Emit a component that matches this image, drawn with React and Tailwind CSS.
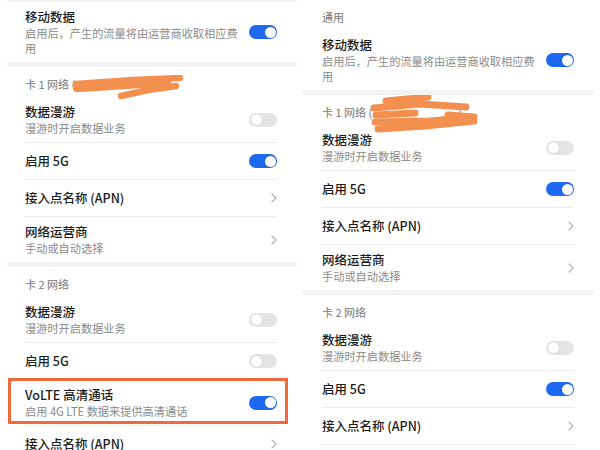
import React from "react";

const FONT = { fontFamily: '"Noto Sans CJK SC", "Noto Sans", sans-serif' };

const Toggle = ({ on }) => (
  <div
    className={`flex h-[14px] w-[28px] shrink-0 items-center rounded-full p-[1.5px] ${
      on ? "justify-end bg-[#1f68f0]" : "justify-start bg-[#e4e4e4]"
    }`}
  >
    <div className="h-[11px] w-[11px] rounded-full bg-white shadow-[0_0_1px_rgba(0,0,0,0.25)]" />
  </div>
);

const Chevron = () => (
  <svg width="6" height="10" viewBox="0 0 6 10" className="shrink-0">
    <polyline points="1,1 5,5 1,9" fill="none" stroke="#b4b4b4" strokeWidth="1.2" strokeLinecap="round" strokeLinejoin="round" />
  </svg>
);

const ScribbleLeft = () => (
  <svg width="112" height="26" viewBox="0 0 112 26" className="pointer-events-none absolute left-[48px] top-[8px]">
    <g fill="none" stroke="#f39050" strokeWidth="6.5" strokeLinecap="round" strokeLinejoin="round">
      <path d="M3 9 L60 5 L107 3" />
      <path d="M4 14 L50 11 L95 8" />
      <path d="M48 21 L75 15 L103 11" />
    </g>
  </svg>
);

const ScribbleRight = () => (
  <svg width="110" height="40" viewBox="0 0 110 40" className="pointer-events-none absolute left-[48px] top-[0px]">
    <g fill="none" stroke="#f39050" strokeWidth="7" strokeLinecap="round" strokeLinejoin="round">
      <path d="M16 6 L58 2" />
      <path d="M4 13 L50 9 L96 12" />
      <path d="M6 20 L45 18" />
      <path d="M78 20 L104 22" />
      <path d="M5 27 L60 26 L100 22" />
      <path d="M8 34 L55 31 L104 26" />
    </g>
    <text x="62" y="22" fontSize="8" fill="#ffffff" style={FONT}>....</text>
  </svg>
);

const Header = ({ children, scribble }) => (
  <div className="relative h-[30px] pt-[9px] text-[11px] leading-[16px] text-[#777777]">
    {children}
    {scribble}
  </div>
);

const Row = ({ title, sub, sub2, control, last, highlight }) => (
  <div
    className={`relative flex items-center gap-[10px] ${sub ? "py-[6px]" : "h-[37px]"} ${
      last ? "" : "border-b border-[#ececec]"
    }`}
  >
    <div className="flex min-w-0 flex-1 flex-col">
      <span className="text-[12.5px] font-medium leading-[18px] text-[#1b1b1b]">{title}</span>
      {sub && <span className="whitespace-nowrap text-[11.2px] leading-[15px] text-[#8a8a8a]">{sub}</span>}
      {sub2 && <span className="text-[11.2px] leading-[15px] text-[#8a8a8a]">{sub2}</span>}
    </div>
    {control === "chevron" ? <Chevron /> : <Toggle on={control === "on"} />}
    {highlight && (
      <div className="pointer-events-none absolute -left-[17px] -right-[11px] -top-[2px] bottom-[1px] border-[3px] border-[#ef6a3a]" />
    )}
  </div>
);

const Section = ({ padding, children }) => (
  <div className={`bg-white ${padding}`}>{children}</div>
);

const Panel = ({ variant }) => {
  const left = variant === "left";
  const pad = left ? "pl-[18px] pr-[20px]" : "pl-[19px] pr-[19px]";
  return (
    <div className="h-[450px] w-[300px] shrink-0 overflow-hidden bg-white">
      <div
        className={`flex flex-col gap-[5px] bg-[#f3f3f3] ${
          left ? "ml-[7px] mr-[3px] pt-[2px]" : "ml-[3px] mr-[7px]"
        }`}
      >
        <Section padding={pad}>
          {!left && <Header>通用</Header>}
          <Row title="移动数据" sub="启用后，产生的流量将由运营商收取相应费" sub2="用" control="on" last />
        </Section>
        <Section padding={pad}>
          <Header scribble={left ? <ScribbleLeft /> : <ScribbleRight />}>
            卡 1 网络 (<span className="inline-block w-[86px]" />)
          </Header>
          <Row title="数据漫游" sub="漫游时开启数据业务" control="off" />
          <Row title="启用 5G" control="on" />
          <Row title="接入点名称 (APN)" control="chevron" />
          <Row title="网络运营商" sub="手动或自动选择" control="chevron" last />
        </Section>
        <Section padding={pad}>
          <Header>卡 2 网络</Header>
          <Row title="数据漫游" sub="漫游时开启数据业务" control="off" />
          {left ? (
            <>
              <Row title="启用 5G" control="off" />
              <Row title="VoLTE 高清通话" sub="启用 4G LTE 数据来提供高清通话" control="on" highlight />
            </>
          ) : (
            <Row title="启用 5G" control="on" />
          )}
          <Row title="接入点名称 (APN)" control="chevron" />
          <Row title="网络运营商" sub="手动或自动选择" control="chevron" last />
        </Section>
      </div>
    </div>
  );
};

export default function App() {
  return (
    <div className="flex h-[450px] w-[600px] overflow-hidden bg-white" style={FONT}>
      <Panel variant="left" />
      <Panel variant="right" />
    </div>
  );
}
